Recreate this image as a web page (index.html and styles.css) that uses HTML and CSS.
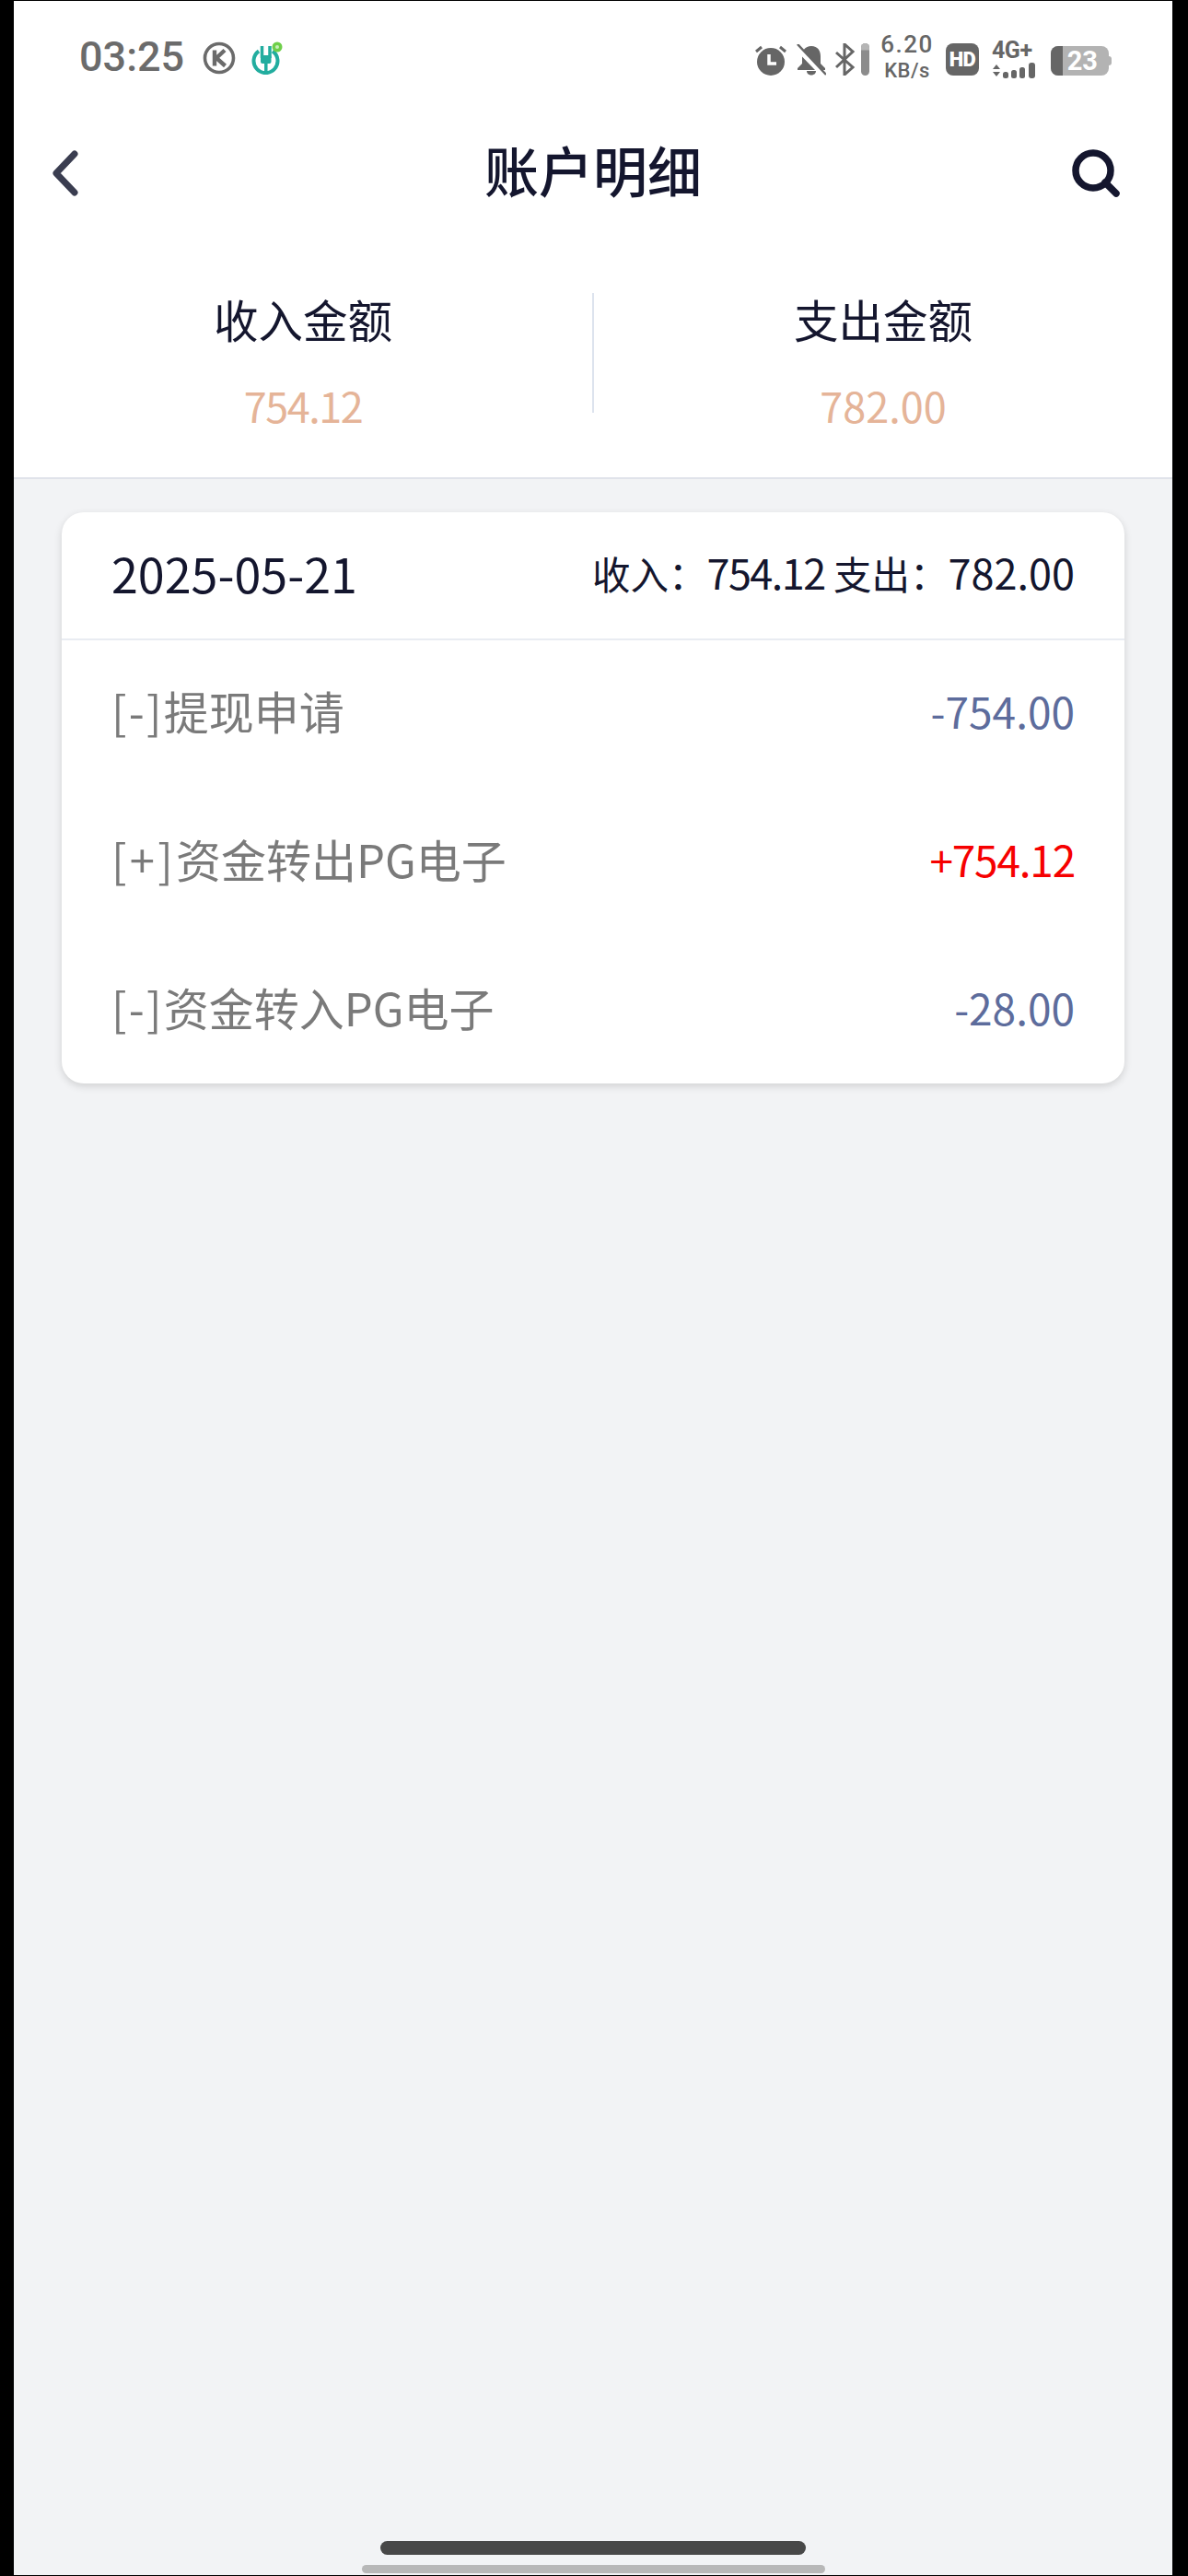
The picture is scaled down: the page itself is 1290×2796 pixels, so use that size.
FILE: index.html
```html
<!DOCTYPE html>
<html lang="zh">
<head>
<meta charset="utf-8">
<title>账户明细</title>
<link rel="stylesheet" href="styles.css">
</head>
<body>
<div class="screen">
  <div class="top">
    <div class="status">
      <div class="status-left">
        <span class="time">03:25</span>
        <svg class="ic-k" viewBox="0 0 36 36"><circle cx="18" cy="18" r="15.5" fill="none" stroke="#6b6b6b" stroke-width="3.6"/><path d="M13 9.500v17M24 9.500l-9 8.500 9.500 8.500" fill="none" stroke="#6b6b6b" stroke-width="4.400"/></svg>
        <svg class="ic-bank" viewBox="0 0 34 36"><path d="M8 10.500a13 13 0 1 0 15 0" fill="none" stroke="#22ad9f" stroke-width="4"/><path d="M11.500 5v13M20 5v13M15.800 22v12" stroke="#22ad9f" stroke-width="3.500" fill="none"/><rect x="10" y="15" width="11.500" height="9" rx="2" fill="#22ad9f"/><circle cx="28" cy="6" r="5.500" fill="#6fcf4a"/><circle cx="28" cy="6" r="2" fill="#c9efba"/></svg>
      </div>
      <div class="status-right">
        <svg class="ic-alarm" viewBox="0 0 36 34"><circle cx="18" cy="19" r="15" fill="#666"/><path d="M2 8l6-5M34 8l-6-5" stroke="#666" stroke-width="3" fill="none"/><path d="M16 11v10h8" stroke="#fff" stroke-width="3.500" fill="none"/></svg>
        <svg class="ic-bell" viewBox="0 0 32 34"><path d="M16 2c-7 0-10 5-10 11v8l-5 5v2h30v-2l-5-5v-8c0-6-3-11-10-11zM11 29h10c0 6-10 6-10 0z" fill="#666"/><path d="M0 3l30 31" stroke="#fff" stroke-width="6"/><path d="M1 0l31 33" stroke="#666" stroke-width="2.500"/></svg>
        <svg class="ic-bt" viewBox="0 0 37 35"><path d="M1 10l18 16-9 8V1l9 8L1 26" fill="none" stroke="#666" stroke-width="3"/><rect x="28" y="0" width="9" height="35" rx="4.500" fill="#8c8c8c"/><path d="M28 4.500a4.500 4.500 0 0 1 9 0v3h-9z" fill="#b5b5b5"/></svg>
        <div class="speed"><span class="speed-num">6.20</span><span class="speed-unit">KB/s</span></div>
        <div class="hd">HD</div>
        <div class="net">
          <span class="net-label">4G+</span>
          <svg class="ic-bars" viewBox="0 0 52 17"><path d="M1 7l4-5 4 5zM1 10l4 5 4-5z" fill="#666"/><rect x="12" y="10" width="6" height="7" rx="2.500" fill="#666"/><rect x="21" y="8" width="6" height="9" rx="2.500" fill="#666"/><rect x="30" y="5" width="6" height="12" rx="2.500" fill="#666"/><rect x="40" y="0" width="7" height="17" rx="3" fill="#666"/></svg>
        </div>
        <div class="battery"><span class="battery-fill"></span><span class="battery-num">23</span><span class="battery-nub"></span></div>
      </div>
    </div>
    <div class="nav">
      <svg class="ic-back" viewBox="0 0 28 50"><path d="M24 4L4 25l20 21" fill="none" stroke="#3a3d50" stroke-width="7" stroke-linecap="round" stroke-linejoin="round"/></svg>
      <div class="title">账户明细</div>
      <svg class="ic-search" viewBox="0 0 52 52"><circle cx="23" cy="23" r="19" fill="none" stroke="#14162e" stroke-width="7.500"/><path d="M36 36l12 12" stroke="#14162e" stroke-width="7.500" stroke-linecap="round"/></svg>
    </div>
    <div class="summary">
      <div class="sum-col">
        <div class="sum-label">收入金额</div>
        <div class="sum-value tight">754.12</div>
      </div>
      <div class="sum-col sum-col-r">
        <div class="sum-label">支出金额</div>
        <div class="sum-value">782.00</div>
      </div>
    </div>
  </div>
  <div class="card">
    <div class="card-head">
      <span class="date">2025-05-21</span>
      <span class="totals">收入：<span class="num tight">754.12</span> 支出：<span class="num">782.00</span></span>
    </div>
    <div class="row"><span class="row-name"><span class="prefix">[-]</span>提现申请</span><span class="amt amt-out">-754.00</span></div>
    <div class="row"><span class="row-name"><span class="prefix prefix-plus">[+]</span>资金转出PG电子</span><span class="amt amt-in">+754.12</span></div>
    <div class="row"><span class="row-name"><span class="prefix">[-]</span>资金转入PG电子</span><span class="amt amt-out">-28.00</span></div>
  </div>
  <div class="home">
    <div class="home-bar"></div>
    <div class="home-sub"></div>
  </div>
</div>
</body>
</html>
```
FILE: styles.css
```css
* { box-sizing: border-box; }
html, body { margin: 0; padding: 0; background: #000; }
body { font-family: "Noto Sans CJK SC", "Noto Sans", sans-serif; }
.screen {
  width: 1258px;
  height: 2794px;
  margin: 1px 0 0 15px;
  background: #f2f3f5;
  display: flex;
  flex-direction: column;
}
.top { background: #fff; border-bottom: 2px solid #e0e3ea; height: 519px; }

.status {
  height: 92px;
  display: flex;
  justify-content: space-between;
  padding: 0 69px 0 71px;
}
.status-left { display: flex; align-items: flex-start; }
.time {
  font-family: Roboto, sans-serif;
  font-weight: 500;
  font-size: 45px;
  line-height: 52px;
  margin-top: 35px;
  color: #6b6b6b;
  width: 134px;
}
.ic-k { width: 36px; height: 36px; margin-top: 44px; }
.ic-bank { width: 34px; height: 36px; margin: 44px 0 0 17px; }
.status-right { display: flex; align-items: flex-start; }
.ic-alarm { width: 36px; height: 34px; margin-top: 47px; }
.ic-bell { width: 32px; height: 34px; margin: 47px 0 0 10px; }
.ic-bt { width: 37px; height: 35px; margin: 46px 0 0 10px; }
.speed { display: flex; flex-direction: column; align-items: center; width: 56px; margin: 33px 0 0 13px; color: #666; font-family: Roboto, sans-serif; }
.speed-num { font-size: 26px; line-height: 29px; letter-spacing: 1.500px; font-weight: 500; }
.speed-unit { font-size: 22px; line-height: 28px; letter-spacing: 0.500px; font-weight: 500; }
.hd {
  width: 36px; height: 35px; margin: 46px 0 0 14px;
  background: #666; border-radius: 8px; color: #fff;
  font-family: Roboto, sans-serif; font-weight: 900; font-size: 22px; line-height: 35px;
  text-align: center; letter-spacing: -0.5px;
}
.net { width: 52px; margin: 43px 0 0 14px; display: flex; flex-direction: column; }
.net-label { font-family: Roboto, sans-serif; font-weight: 700; font-size: 25px; line-height: 21px; color: #666; letter-spacing: -0.5px; }
.ic-bars { width: 52px; height: 17px; margin-top: 3px; }
.battery {
  position: relative;
  width: 63px; height: 32px; margin: 49px 0 0 12px;
  background: #b3b3b3; border-radius: 8px;
  display: flex; align-items: center; justify-content: flex-end;
  padding-right: 12px;
}
.battery-fill { position: absolute; left: 0; top: 0; bottom: 0; width: 13px; background: #666; border-radius: 8px 0 0 8px; }
.battery-num { font-family: Roboto, sans-serif; font-weight: 700; font-size: 29px; line-height: 32px; color: #fff; }
.battery-nub { position: absolute; right: -3px; top: 11px; width: 3px; height: 10px; background: #b3b3b3; border-radius: 0 3px 3px 0; }

.nav {
  height: 189px;
  display: grid;
  grid-template-columns: 1fr auto 1fr;
  align-items: center;
  padding: 0 42px;
}
.ic-back { width: 28px; height: 50px; }
.ic-search { width: 52px; height: 52px; justify-self: end; margin-right: 15px; }
.title { font-size: 59px; font-weight: 500; color: #14162e; line-height: 80px; padding-bottom: 8px; }

.summary { display: flex; padding-top: 36px; }
.sum-col {
  flex: 1;
  height: 130px;
  display: flex;
  flex-direction: column;
  align-items: center;
  justify-content: space-between;
}
.sum-col-r { border-left: 2px solid #dde3ee; }
.sum-label { font-size: 48.500px; line-height: 56px; color: #14162e; }
.sum-value { font-size: 45px; line-height: 50px; color: #e5b498; margin-bottom: -17px; }
.tight { letter-spacing: -1.500px; }

.card {
  margin: 36px 52px 0 52px;
  height: 620px;
  background: #fff;
  border-radius: 24px;
  box-shadow: 0 3px 8px rgba(0, 0, 0, 0.14);
}
.card-head {
  height: 139px;
  display: flex;
  align-items: center;
  justify-content: space-between;
  padding: 0 54px 6px;
  border-bottom: 2px solid #e9ecf2;
}
.date { font-size: 52px; color: #14162e; line-height: 60px; }
.totals { font-size: 41.500px; color: #14162e; line-height: 60px; }
.num { font-size: 45px; }
.row {
  height: 161px;
  display: flex;
  align-items: center;
  justify-content: space-between;
  padding: 0 54px 10px;
}
.row-name { font-size: 49px; color: #7a7a7a; line-height: 60px; }
.prefix { letter-spacing: 2.200px; }
.prefix-plus { letter-spacing: 3.200px; }
.amt { font-size: 46px; line-height: 60px; }
.amt-out { color: #5d6c9c; }
.amt-in { color: #f60000; letter-spacing: -1.200px; }

.home { margin-top: auto; display: flex; flex-direction: column; align-items: center; padding-bottom: 2px; }
.home-bar { width: 462px; height: 15px; background: #484848; border-radius: 8px; }
.home-sub { width: 503px; height: 9px; margin-top: 11px; background: #b8b8b8; border-radius: 5px; }
```
